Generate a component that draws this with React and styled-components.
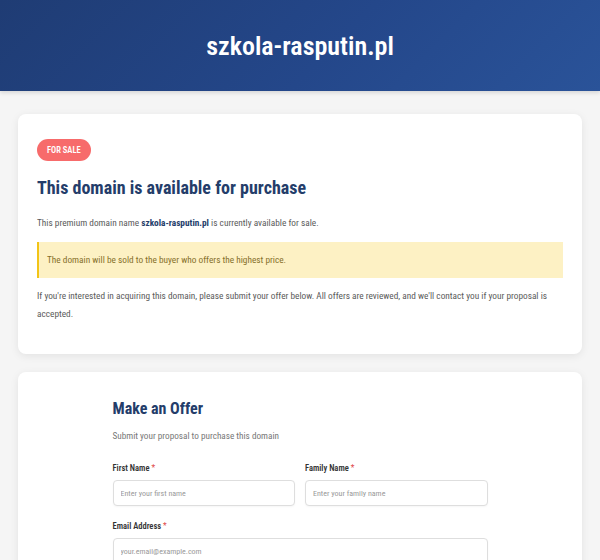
import React from 'react';
import styled, { createGlobalStyle } from 'styled-components';

const GlobalStyle = createGlobalStyle`
  * { box-sizing: border-box; }
  body {
    margin: 0;
    background: #f5f5f5;
    font-family: Roboto, "Liberation Sans", Arial, sans-serif;
    font-stretch: 75%;
  }
`;

const App = () => {
  return (
    <>
      <GlobalStyle />
      <Header>
        <SiteTitle>szkola-rasputin.pl</SiteTitle>
      </Header>
      <Main>
        <Card>
          <Badge>For Sale</Badge>
          <Heading>This domain is available for purchase</Heading>
          <Text>
            This premium domain name <Strong>szkola-rasputin.pl</Strong> is currently available for sale.
          </Text>
          <Notice>The domain will be sold to the buyer who offers the highest price.</Notice>
          <Text>
            If you're interested in acquiring this domain, please submit your offer below. All offers are
            reviewed, and we'll contact you if your proposal is accepted.
          </Text>
        </Card>
        <Card>
          <Form>
            <FormTitle>Make an Offer</FormTitle>
            <FormSubtitle>Submit your proposal to purchase this domain</FormSubtitle>
            <Row>
              <Field>
                <Label>First Name <Req>*</Req></Label>
                <Input type="text" placeholder="Enter your first name" />
              </Field>
              <Field>
                <Label>Family Name <Req>*</Req></Label>
                <Input type="text" placeholder="Enter your family name" />
              </Field>
            </Row>
            <Field>
              <Label>Email Address <Req>*</Req></Label>
              <Input type="email" placeholder="your.email@example.com" />
            </Field>
          </Form>
        </Card>
      </Main>
    </>
  );
};

const Header = styled.header`
  height: 91px;
  background: linear-gradient(135deg, #1f3c74 0%, #24478a 55%, #2a5399 100%);
  display: flex;
  align-items: center;
  justify-content: center;
  box-shadow: 0 2px 4px rgba(0, 0, 0, 0.12);
`;

const SiteTitle = styled.h1`
  margin: 0;
  color: #fff;
  font-size: 26px;
  font-weight: 600;
`;

const Main = styled.main`
  padding: 23px 18px 40px;
  display: flex;
  flex-direction: column;
  gap: 18px;
`;

const Card = styled.section`
  background: #fff;
  border-radius: 8px;
  box-shadow: 0 2px 8px rgba(0, 0, 0, 0.08);
  padding: 24px 19px 21px;
`;

const Badge = styled.span`
  display: inline-block;
  background: #f76b6b;
  color: #fff;
  font-size: 8.5px;
  font-weight: 600;
  text-transform: uppercase;
  line-height: 22px;
  padding: 0 10px;
  border-radius: 11px;
`;

const Heading = styled.h2`
  margin: 15px 0 14px;
  color: #243d6a;
  font-size: 18px;
  font-weight: 700;
  line-height: 24px;
`;

const Text = styled.p`
  margin: 0 0 10px;
  color: #5a5a5a;
  font-size: 9.3px;
  line-height: 18px;
`;

const Strong = styled.strong`
  color: #243d6a;
  font-weight: 700;
`;

const Notice = styled.div`
  background: #fdf1c4;
  border-left: 2px solid #f2c417;
  color: #86702a;
  font-size: 9.3px;
  line-height: 18px;
  padding: 9px 8px;
  margin: 0 0 9px;
`;

const Form = styled.div`
  max-width: 375px;
  margin: 0 auto;
  padding-top: 1px;
`;

const FormTitle = styled.h2`
  margin: 0 0 7px;
  color: #243d6a;
  font-size: 16px;
  font-weight: 700;
  line-height: 24px;
`;

const FormSubtitle = styled.p`
  margin: 0 0 18px;
  color: #777;
  font-size: 9.2px;
  line-height: 16px;
`;

const Row = styled.div`
  display: grid;
  grid-template-columns: 1fr 1fr;
  gap: 10px;
`;

const Field = styled.div`
  display: flex;
  flex-direction: column;
  margin-bottom: 14px;
`;

const Label = styled.label`
  color: #333;
  font-size: 8.5px;
  font-weight: 600;
  line-height: 12px;
  margin-bottom: 6px;
`;

const Req = styled.span`
  color: #e04848;
  font-weight: 400;
`;

const Input = styled.input`
  height: 26px;
  border: 1px solid #dedede;
  border-radius: 4px;
  padding: 0 7px;
  font-family: inherit;
  font-stretch: inherit;
  font-size: 8px;
  color: #333;
  box-shadow: 0 1px 2px rgba(0, 0, 0, 0.04);
  &::placeholder {
    color: #999;
  }
`;

export default App;
